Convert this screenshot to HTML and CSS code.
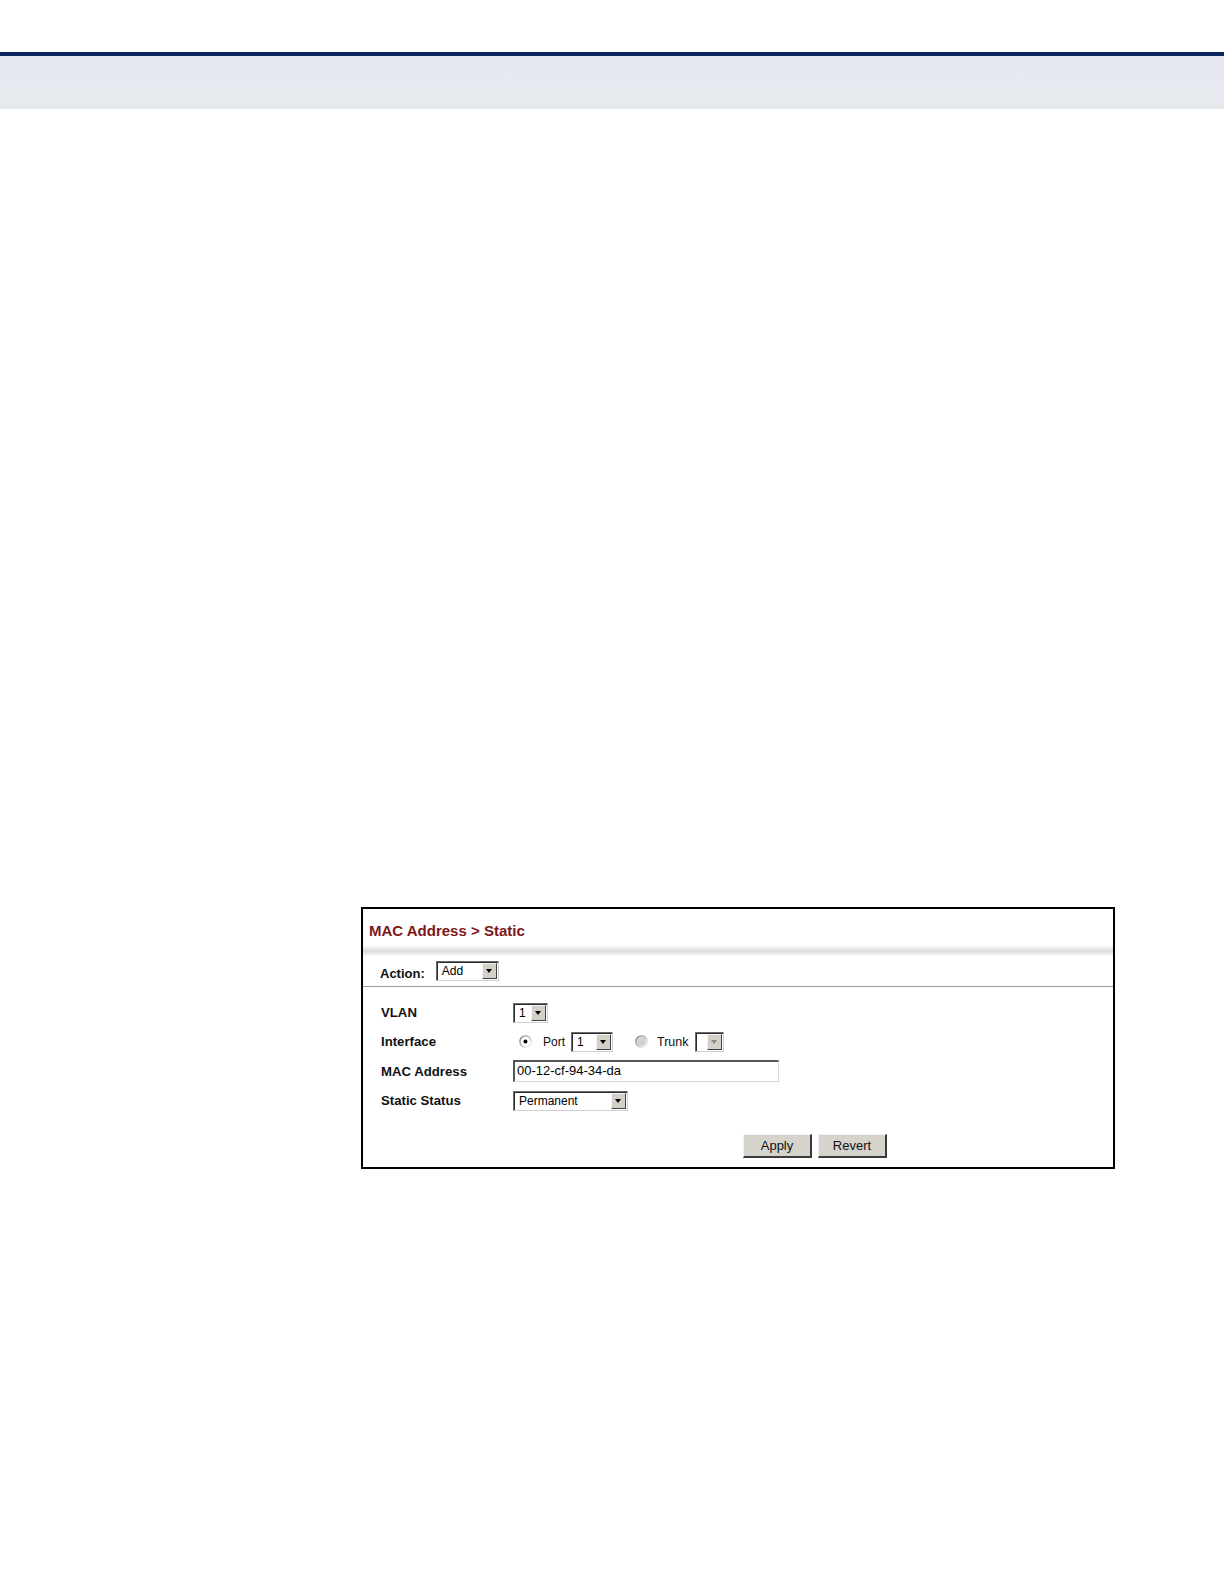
FILE: index.html
```html
<!DOCTYPE html>
<html>
<head>
<meta charset="utf-8">
<link rel="stylesheet" href="styles.css">
</head>
<body>
<div class="topline"></div>
<div class="band"></div>
<div class="frame">
  <div class="title">MAC Address &gt; Static</div>
  <div class="shade"></div>
  <div class="action">
    <span class="lbl">Action:</span>
    <span class="sel w-add"><span class="val">Add</span><span class="arrow"></span></span>
  </div>
  <div class="form">
    <div class="flabel">VLAN</div>
    <div class="fctl"><span class="sel w-vlan"><span class="val">1</span><span class="arrow"></span></span></div>

    <div class="flabel">Interface</div>
    <div class="fctl">
      <svg class="radio" width="13" height="13" viewBox="0 0 13 13">
        <defs><linearGradient id="rg" x1="0" y1="0" x2="1" y2="1"><stop offset="0" stop-color="#707070"/><stop offset="1" stop-color="#ffffff"/></linearGradient></defs>
        <circle cx="6.5" cy="6.5" r="5.6" fill="#fff" stroke="url(#rg)" stroke-width="1.4"/>
        <circle cx="6.5" cy="6.5" r="2" fill="#000"/>
      </svg>
      <span class="rtext">Port</span>
      <span class="sel w-port"><span class="val">1</span><span class="arrow"></span></span>
      <svg class="radio r2" width="13" height="13" viewBox="0 0 13 13">
        <circle cx="6.5" cy="6.5" r="5.6" fill="#e8e8e8" stroke="url(#rg)" stroke-width="1.4"/>
        <circle cx="6.5" cy="6.5" r="4" fill="#d0d0d0"/>
      </svg>
      <span class="rtext trunk">Trunk</span>
      <span class="sel w-trunk dis"><span class="val"></span><span class="arrow"></span></span>
    </div>

    <div class="flabel">MAC Address</div>
    <div class="fctl"><span class="input">00-12-cf-94-34-da</span></div>

    <div class="flabel">Static Status</div>
    <div class="fctl"><span class="sel w-status"><span class="val">Permanent</span><span class="arrow"></span></span></div>
  </div>
  <div class="buttons">
    <span class="btn">Apply</span>
    <span class="btn">Revert</span>
  </div>
</div>
</body>
</html>
```

FILE: styles.css
```css
html, body {
  margin: 0;
  padding: 0;
  background: #ffffff;
  font-family: "Liberation Sans", Arial, sans-serif;
}
.topline {
  margin-top: 52px;
  height: 4px;
  background: #0b2461;
}
.band {
  height: 53px;
  background: linear-gradient(#e5e8f1, #e6e9ec);
}
.frame {
  margin-top: 798px;
  margin-left: 361px;
  width: 750px;
  height: 258px;
  border: 2px solid #000;
  background: #fff;
}
.title {
  height: 36px;
  box-sizing: border-box;
  padding: 13px 0 0 6px;
  font-size: 15px;
  font-weight: bold;
  color: #7d1719;
}
.shade {
  height: 11px;
  background: linear-gradient(#ffffff, #ececec 30%, #dcdcdc 60%, #efefef 85%, #ffffff);
}
.action {
  height: 31px;
  box-sizing: border-box;
  padding: 5px 0 0 17px;
  display: flex;
  align-items: flex-start;
  border-bottom: 1px solid #9a9a9a;
}
.action .lbl {
  font-size: 13px;
  font-weight: bold;
  color: #111;
  margin-right: 11px;
  line-height: 20px;
  margin-top: 3px;
}
.sel {
  display: inline-flex;
  box-sizing: border-box;
  height: 20px;
  border-top: 1px solid #6b6b6b;
  border-left: 1px solid #6b6b6b;
  border-right: 1px solid #cfcfcf;
  border-bottom: 1px solid #cfcfcf;
  box-shadow: inset 1px 1px 0 #2b2b2b;
  background: #fff;
  padding: 1px;
}
.sel .val {
  flex: 1;
  font-size: 12px;
  line-height: 17px;
  padding-left: 4px;
  color: #000;
}
.sel .arrow {
  width: 15px;
  height: 16px;
  box-sizing: border-box;
  background: #d4d0c8;
  border-top: 1px solid #f4f4f4;
  border-left: 1px solid #f4f4f4;
  border-right: 1px solid #404040;
  border-bottom: 1px solid #404040;
  position: relative;
}
.sel .arrow::after {
  content: "";
  position: absolute;
  left: 3px;
  top: 5px;
  border-left: 3.5px solid transparent;
  border-right: 3.5px solid transparent;
  border-top: 4px solid #000;
}
.sel.dis .arrow::after {
  border-top-color: #8a8a8a;
}
.w-add { width: 63px; }
.w-vlan { width: 35px; }
.w-port { width: 42px; }
.w-trunk { width: 29px; }
.w-status { width: 115px; }

.form {
  display: grid;
  grid-template-columns: 132px auto;
  grid-auto-rows: 29.3px;
  padding: 11px 0 0 18px;
  align-items: center;
}
.flabel {
  font-size: 13.2px;
  font-weight: bold;
  color: #111;
}
.fctl {
  display: flex;
  align-items: center;
  height: 29px;
}
.radio {
  margin-left: 6px;
  margin-right: 11px;
}
.radio.r2 {
  margin-left: 22px;
  margin-right: 9px;
}
.rtext {
  font-size: 12px;
  color: #111;
  margin-right: 6px;
}
.rtext.trunk {
  font-size: 12.5px;
  margin-right: 6px;
}
.input {
  display: block;
  box-sizing: border-box;
  width: 266px;
  height: 22px;
  border-top: 2px solid #555;
  border-left: 2px solid #555;
  border-right: 1px solid #d8d8d8;
  border-bottom: 1px solid #d8d8d8;
  font-size: 13px;
  line-height: 18px;
  padding-left: 2px;
  color: #000;
}
.buttons {
  display: flex;
  gap: 6px;
  padding: 19px 0 0 380px;
}
.btn {
  display: block;
  box-sizing: border-box;
  width: 69px;
  height: 24px;
  background: #d6d3cc;
  border-top: 1px solid #f2f2f2;
  border-left: 1px solid #f2f2f2;
  border-right: 2px solid #3a3a3a;
  border-bottom: 2px solid #3a3a3a;
  font-size: 13px;
  line-height: 21px;
  text-align: center;
  color: #111;
}
```
